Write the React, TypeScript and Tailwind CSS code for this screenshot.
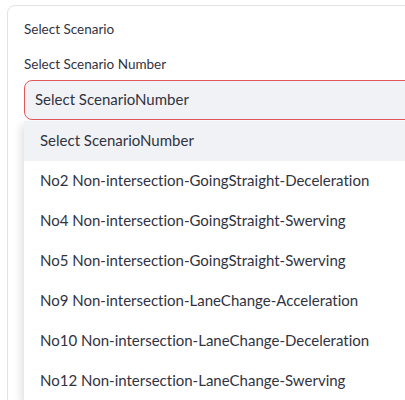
const options = [
  'Select ScenarioNumber',
  'No2 Non-intersection-GoingStraight-Deceleration',
  'No4 Non-intersection-GoingStraight-Swerving',
  'No5 Non-intersection-GoingStraight-Swerving',
  'No9 Non-intersection-LaneChange-Acceleration',
  'No10 Non-intersection-LaneChange-Deceleration',
  'No12 Non-intersection-LaneChange-Swerving',
];

export default function App() {
  return (
    <div className="h-[400px] w-[405px] overflow-hidden bg-white pl-[7px] pt-[5px] font-['Lato',sans-serif] text-[#31333f] [font-variant-ligatures:none]">
      <div className="h-[420px] w-[440px] rounded-lg border border-[#e2e3e6] pl-4 pt-[14px]">
        <p className="text-[13.5px] leading-[18px]">Select Scenario</p>
        <p className="mt-[17px] text-[13.5px] leading-[18px]">Select Scenario Number</p>
        <div className="mt-[7px] flex h-10 w-[420px] items-center rounded-lg border border-[#e0575b] bg-[#f0f2f6] px-[10px] pb-px text-[15px]">
          Select ScenarioNumber
        </div>
        <ul className="mt-px w-[420px] bg-white shadow-[-3px_4px_8px_rgba(0,0,0,0.12)]">
          {options.map((opt, i) => (
            <li
              key={opt}
              className={`flex h-10 items-center px-4 pb-px text-[15px] ${i === 0 ? 'bg-[#f0f2f6]' : ''}`}
            >
              {opt}
            </li>
          ))}
        </ul>
      </div>
    </div>
  );
}
